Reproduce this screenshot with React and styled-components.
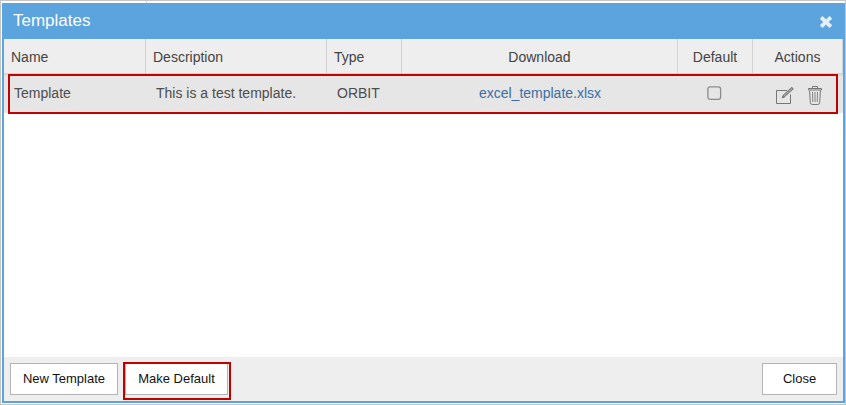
import React from 'react';
import styled, { createGlobalStyle } from 'styled-components';

const GlobalStyle = createGlobalStyle`
  * { box-sizing: border-box; }
  body { margin: 0; background: #fff; font-family: "Liberation Sans", Arial, sans-serif; }
`;

const Frame = styled.div`
  width: 846px;
  height: 405px;
  padding: 2px 0 1px 1px;
  border: 1px solid #c6c6c6;
  background: linear-gradient(#d4d4d4, #d4d4d4) 145px 0 / 1px 2px no-repeat #fff;
  overflow: hidden;
`;

const Dialog = styled.section`
  height: 100%;
  display: flex;
  flex-direction: column;
  border: 2px solid #5ba4de;
  border-top: 0;
  background: #fff;
`;

const TitleBar = styled.header`
  flex: none;
  height: 36px;
  padding: 0 11px 0 9px;
  display: flex;
  align-items: center;
  justify-content: space-between;
  background: #5ba4de;
  color: #fff;
`;

const Title = styled.h1`
  margin: 0;
  font-size: 17px;
  line-height: 34px;
  font-weight: 400;
`;

const CloseIcon = styled.button`
  width: 12px;
  height: 12px;
  margin-top: 2px;
  padding: 0;
  border: 0;
  background: none;
  svg { display: block; }
`;

const columns = '142px 181px 75px 276px 75px 90px';

const TableHead = styled.div`
  flex: none;
  display: grid;
  grid-template-columns: ${columns};
  height: 35px;
  background: #eee;
  border-bottom: 1px solid #d2d2d2;
`;

const HeadCell = styled.div`
  padding: 0 7px;
  border-right: 1px solid #d2d2d2;
  font-size: 14px;
  line-height: 36px;
  color: #444;
  text-align: ${(p) => p.$align || 'left'};
`;

const TableRow = styled.div`
  position: relative;
  flex: none;
  display: grid;
  grid-template-columns: ${columns};
  height: 39px;
  background: linear-gradient(#d8d8d8, #e6e6e6 3px);
`;

const Cell = styled.div`
  padding: 0 10px;
  font-size: 14px;
  line-height: 38px;
  color: #4d4d4d;
  text-align: ${(p) => p.$align || 'left'};
  white-space: nowrap;
`;

const FileLink = styled.a`
  color: #3a6ea5;
  text-decoration: none;
`;

const CheckCell = styled.div`
  padding: 12px 0 0 29px;
  svg { display: block; }
`;

const ActionsCell = styled.div`
  display: flex;
  gap: 13px;
  padding: 12px 0 0 23px;
  color: #777;
  svg { display: block; }
`;

const Highlight = styled.span`
  position: absolute;
  border: 2px solid #c30000;
  pointer-events: none;
`;

const RowHighlight = styled(Highlight)`
  left: 4px;
  right: 5px;
  top: 0;
  height: 40px;
`;

const ButtonHighlight = styled(Highlight)`
  inset: -2px -4px -6px -3px;
`;

const Body = styled.div`
  flex: 1;
`;

const Footer = styled.footer`
  flex: none;
  display: flex;
  align-items: flex-start;
  gap: 7px;
  height: 44px;
  padding: 6px 6px 0;
  background: #eee;
`;

const Button = styled.button`
  position: relative;
  width: ${(p) => p.$width};
  height: 32px;
  margin-left: ${(p) => (p.$end ? 'auto' : '0')};
  padding: 0;
  border: 1px solid #b4b4b4;
  background: #fff;
  color: #111;
  font: 13px/30px "Liberation Sans", Arial, sans-serif;
  white-space: nowrap;
`;

const CrossIcon = () => (
  <svg width="12" height="12" viewBox="0 0 12 12">
    <path d="M2.5 2.7 9.5 9.3M9.5 2.7 2.5 9.3" stroke="#e3effa" strokeWidth="3.9" strokeLinecap="square" />
  </svg>
);

const CheckboxIcon = () => (
  <svg width="15" height="15" viewBox="0 0 15 15" role="checkbox" aria-checked="false">
    <rect x=".9" y=".9" width="12.7" height="12.4" rx="2.2" fill="none" stroke="#8c8c8c" strokeWidth="1.3" />
  </svg>
);

const EditIcon = () => (
  <svg width="19" height="19" viewBox="0 0 19 19" fill="none" stroke="currentColor">
    <path d="M11 4.5H.5v13h14V8.5" />
    <path d="M7.6 10.3 16.8 1.9" strokeWidth="2.8" />
    <path d="M8 9.9 16.1 2.5" stroke="#d0d0d0" strokeWidth=".8" />
    <path d="M6 12l.8-2.3 1.7 1.5z" fill="#555" stroke="#666" strokeWidth=".4" />
  </svg>
);

const TrashIcon = () => (
  <svg width="15" height="19" viewBox="0 0 15 19" fill="none" stroke="currentColor">
    <path d="M.5 2.5h13v1.5H.5zM4.5 2V.5h5V2M1.6 4.5l.7 12q.1 2 2 2h5.4q1.9 0 2-2l.7-12" />
    <path d="m4.5 6 .3 10M7 6v10M9.5 6l-.3 10" strokeWidth=".9" />
  </svg>
);

export default function App() {
  return (
    <>
      <GlobalStyle />
      <Frame>
        <Dialog>
          <TitleBar>
            <Title>Templates</Title>
            <CloseIcon aria-label="Close dialog"><CrossIcon /></CloseIcon>
          </TitleBar>
          <TableHead>
            <HeadCell>Name</HeadCell>
            <HeadCell>Description</HeadCell>
            <HeadCell>Type</HeadCell>
            <HeadCell $align="center">Download</HeadCell>
            <HeadCell $align="center">Default</HeadCell>
            <HeadCell $align="center">Actions</HeadCell>
          </TableHead>
          <TableRow>
            <Cell>Template</Cell>
            <Cell>This is a test template.</Cell>
            <Cell>ORBIT</Cell>
            <Cell $align="center"><FileLink>excel_template.xlsx</FileLink></Cell>
            <CheckCell><CheckboxIcon /></CheckCell>
            <ActionsCell><EditIcon /><TrashIcon /></ActionsCell>
            <RowHighlight />
          </TableRow>
          <Body />
          <Footer>
            <Button $width="108px">New Template</Button>
            <Button $width="103px">Make Default<ButtonHighlight /></Button>
            <Button $width="75px" $end>Close</Button>
          </Footer>
        </Dialog>
      </Frame>
    </>
  );
}
